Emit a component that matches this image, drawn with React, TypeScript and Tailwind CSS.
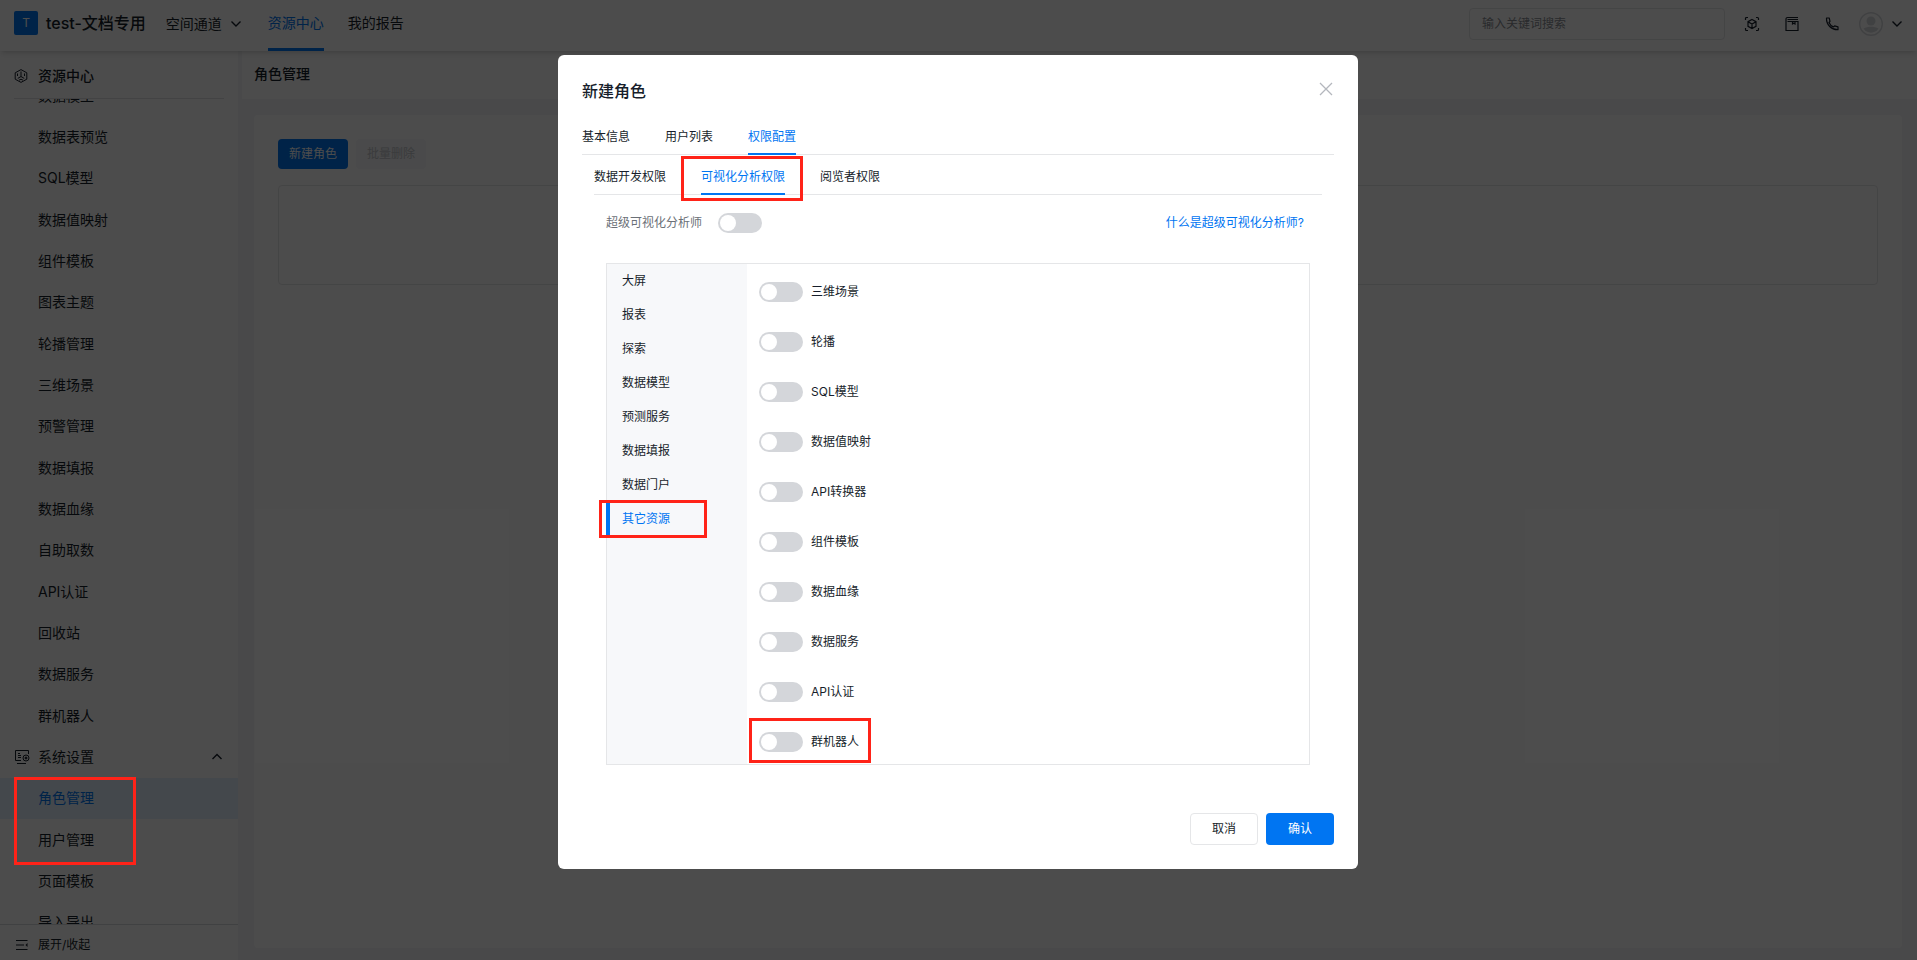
import React, { useState } from 'react';

const sideItems = [
  '数据表预览', 'SQL模型', '数据值映射', '组件模板', '图表主题', '轮播管理', '三维场景', '预警管理',
  '数据填报', '数据血缘', '自助取数', 'API认证', '回收站', '数据服务', '群机器人',
];

const resourceTypes = ['大屏', '报表', '探索', '数据模型', '预测服务', '数据填报', '数据门户', '其它资源'];

const permissions = [
  '三维场景', '轮播', 'SQL模型', '数据值映射', 'API转换器', '组件模板', '数据血缘', '数据服务', 'API认证', '群机器人',
];

const Chevron: React.FC<{ up?: boolean }> = ({ up = false }) => (
  <svg className="w-3 h-3" viewBox="0 0 12 12" fill="none" stroke="currentColor" strokeWidth="1.4">
    <path d={up ? 'M1.5 8 6 3.5 10.5 8' : 'M1.5 3.5 6 8l4.5-4.5'} />
  </svg>
);

const CubeIcon = () => (
  <svg className="w-3.5 h-3.5" viewBox="0 0 14 14" fill="none" stroke="currentColor">
    <path d="M7 .6 12.8 3.8v6.4L7 13.4 1.2 10.2V3.8z" />
    <path d="M7 2.5v5M7 7.5 3.8 9.4M7 7.5l3.200 1.900M3.500 4.500v2.500M10.500 4.500v2.500M5 11.200l2-1 2 1" />
  </svg>
);

const SettingsIcon = () => (
  <svg className="w-4 h-4" viewBox="0 0 16 16" fill="none" stroke="currentColor">
    <path d="M14.5 5V1.5h-13v10H7M3 14.5h9M4 4.5h2M4 6.5h3M4 8.5h3" />
    <circle cx="12" cy="9" r="3" />
    <circle cx="12" cy="9" r="1" fill="currentColor" />
  </svg>
);

const CollapseIcon = () => (
  <svg className="w-3 h-3" viewBox="0 0 12 12" fill="none" stroke="currentColor" strokeWidth="1.2">
    <path d="M0 1.5h11.5M0 6h8M0 10.5h11.5" />
    <path d="M11.5 4l-2 2 2 2z" fill="currentColor" stroke="none" />
  </svg>
);

const ScanIcon = () => (
  <svg className="w-4 h-4" viewBox="0 0 16 16" fill="none" stroke="currentColor" strokeWidth="1.2">
    <path d="M1.5 4V2.5a1 1 0 0 1 1-1H4M12 1.5h1.5a1 1 0 0 1 1 1V4M14.5 12v1.500a1 1 0 0 1-1 1H12M4 14.500H2.500a1 1 0 0 1-1-1V12" />
    <path d="M8 3.5l4 2.200v4.600l-4 2.200-4-2.200V5.700zM4 5.700 8 8l4-2.300M8 8v4.500" />
  </svg>
);

const BookIcon = () => (
  <svg className="w-4 h-4" viewBox="0 0 16 16" fill="none" stroke="currentColor" strokeWidth="1.2">
    <path d="M14 1.500H3.500A1.500 1.500 0 0 0 2 3v11.500h12v-9H3.500M3.500 3.500H14M8.500 5.500V8l1.200-.8L11 8V5.500" />
  </svg>
);

const PhoneIcon = () => (
  <svg className="w-4 h-4" viewBox="0 0 16 16" fill="none" stroke="currentColor" strokeWidth="1.2" strokeLinejoin="round">
    <path d="M2.500 2h2.700l.8 3.300-1 1.200c.8 2 2.300 3.500 4.300 4.400l1.300-1 3.400 1v2.800C7.500 14 2.200 8.800 2.500 2z" />
  </svg>
);

const Avatar = () => (
  <svg className="w-6 h-6" viewBox="0 0 24 24">
    <circle cx="12" cy="12" r="11.3" fill="none" stroke="#d8dade" strokeWidth="1.4" />
    <circle cx="12" cy="9" r="4.5" fill="#d8dade" />
    <path d="M4.500 16.500c4-2.500 11-2.500 15 0a8.800 8.800 0 0 1-15 0z" fill="#d8dade" />
  </svg>
);

const Switch: React.FC<{ label: string; muted?: boolean }> = ({ label, muted = false }) => (
  <label className={`flex w-fit items-center ${muted ? 'flex-row-reverse gap-4 text-[#6b7077]' : 'gap-2'}`}>
    <input
      type="checkbox"
      role="switch"
      className="appearance-none w-11 h-5 rounded-full bg-[#d4d6da] checked:bg-[#0075f2] p-0.5 before:block before:w-4 before:h-4 before:rounded-full before:bg-white checked:before:translate-x-6"
    />
    <span>{label}</span>
  </label>
);

const SideLink: React.FC<{ name: string; active?: boolean }> = ({ name, active = false }) => (
  <a href="#" className={`flex-1 flex items-center pl-[38px] ${active ? 'bg-[#e3f1ff] text-[#0075f2]' : ''}`}>
    {name}
  </a>
);

// Marks the spots the reader has to look at
const Highlight: React.FC<{ className: string }> = ({ className }) => (
  <span className={`absolute border-3 border-[#ff2318] pointer-events-none ${className}`} />
);

const Header = () => (
  <header className="relative z-10 h-[51px] shrink-0 bg-white shadow-md flex items-center px-3.5">
    <div className="w-6 h-6 mb-1.5 rounded-xs bg-[#0075f2] text-white text-xs flex items-center justify-center">T</div>
    <span className="ml-2 mb-1.5 text-base font-medium">test-文档专用</span>
    <button className="ml-5 mb-1 flex items-center gap-2">
      空间通道 <Chevron />
    </button>
    <nav className="ml-[26px] self-stretch flex gap-6">
      <a href="#" className="flex items-center pb-0.5 border-b-3 border-[#0075f2] text-[#0075f2]">资源中心</a>
      <a href="#" className="flex items-center pb-0.5 border-b-3 border-transparent">我的报告</a>
    </nav>
    <input
      aria-label="搜索"
      placeholder="输入关键词搜索"
      className="ml-auto mb-1 w-64 h-8 px-3 text-xs rounded-sm border border-[#e5e6e8] placeholder:text-[#8a8e95]"
    />
    <div className="ml-[19px] mb-1 flex items-center gap-6">
      <button aria-label="扫描"><ScanIcon /></button>
      <button aria-label="文档"><BookIcon /></button>
      <button aria-label="电话"><PhoneIcon /></button>
    </div>
    <button aria-label="账户" className="ml-[19px] mb-1 flex items-center gap-2">
      <Avatar />
      <Chevron />
    </button>
  </header>
);

const Sidebar = () => (
  <aside className="w-[238px] shrink-0 bg-white flex flex-col">
    <div className="mx-3.5 h-12 shrink-0 flex items-center gap-2.5 border-b border-[#e0e1e3] pt-0.5 font-medium">
      <CubeIcon /> 资源中心
    </div>
    <div className="flex-1 min-h-0 overflow-hidden flex flex-col">
      <nav className="flex-1 flex flex-col -mt-6 -mb-[19px]">
        <SideLink name="数据模型" />
        {sideItems.map((name) => (
          <SideLink key={name} name={name} />
        ))}
        <button className="flex-1 flex items-center pl-3.5 pr-[15px] gap-2">
          <SettingsIcon /> 系统设置
          <span className="ml-auto"><Chevron up /></span>
        </button>
        <SideLink name="角色管理" active />
        <SideLink name="用户管理" />
        <SideLink name="页面模板" />
        <SideLink name="导入导出" />
      </nav>
    </div>
    <button className="h-9 shrink-0 border-t border-[#d8dade] flex items-center gap-2.5 pl-4 pb-1 pt-2 text-xs">
      <CollapseIcon /> 展开/收起
    </button>
  </aside>
);

const RolePage = () => (
  <main className="flex-1 flex flex-col bg-[#f5f6f8]">
    <h1 className="ml-1 pl-3 pb-0.5 h-12 shrink-0 flex items-center bg-white font-medium">角色管理</h1>
    <section className="flex-1 ml-4 mr-[15px] mt-4 mb-3 p-6 rounded-sm bg-white text-xs">
      <div className="flex gap-2">
        <button className="h-[30px] w-[70px] rounded-sm bg-[#0075f2] text-white">新建角色</button>
        <button disabled className="h-[30px] w-[70px] rounded-sm bg-[#f7f8fa] text-[#c4c7cc]">批量删除</button>
      </div>
      <div className="mt-4 h-[100px] rounded-sm border border-[#e5e6e8]" />
    </section>
  </main>
);

const RoleDialog = () => {
  const [type, setType] = useState('其它资源');
  return (
    <div role="dialog" aria-label="新建角色" className="w-[800px] rounded-md bg-white p-6 text-xs">
      <div className="flex items-start justify-between">
        <h2 className="text-base font-medium">新建角色</h2>
        <button aria-label="关闭" className="mt-[3px] mr-px text-[#b4b7bd]">
          <svg className="w-3.5 h-3.5" viewBox="0 0 14 14" stroke="currentColor" strokeWidth="1.3">
            <path d="M1 1l12 12M13 1 1 13" />
          </svg>
        </button>
      </div>

      <div className="mt-4 h-9 flex gap-[35px] border-b border-[#e5e6e8]">
        <button>基本信息</button>
        <button>用户列表</button>
        <button className="-mb-px border-b-2 border-[#0075f2] pt-px text-[#0075f2]">权限配置</button>
      </div>

      <div className="mx-3 h-10 pt-1 flex gap-[35px] border-b border-[#e5e6e8]">
        <button>数据开发权限</button>
        <button className="relative -mb-px border-b-2 border-[#0075f2] pt-px text-[#0075f2]">
          可视化分析权限
          <Highlight className="-left-5 -right-[18px] -top-[3px] -bottom-2" />
        </button>
        <button>阅览者权限</button>
      </div>

      <div className="mx-6 mt-[18px] flex items-center justify-between">
        <Switch label="超级可视化分析师" muted />
        <a href="#" className="mr-1.5 text-[#0075f2]">什么是超级可视化分析师?</a>
      </div>

      <div className="mx-6 mt-[30px] flex border border-[#e5e6e8]">
        <div className="w-[140px] bg-[#f7f8fa]">
          {resourceTypes.map((name) => (
            <button
              key={name}
              onClick={() => setType(name)}
              className={`relative block w-full h-[34px] pl-[15px] text-left ${type === name ? 'text-[#0075f2]' : ''}`}
            >
              {type === name && <span className="absolute -left-px inset-y-0 w-1 bg-[#0075f2]" />}
              {name}
              {name === '其它资源' && <Highlight className="-left-2 right-10 -inset-y-0.5" />}
            </button>
          ))}
        </div>
        <div className="flex-1 flex flex-col gap-[30px] pt-[18px] pb-3 pl-3">
          {permissions.map((name) => (
            <div key={name} className="relative h-5 w-fit">
              <Switch label={name} />
              {name === '群机器人' && <Highlight className="-left-2.5 -right-3 -top-3.5 -bottom-[11px]" />}
            </div>
          ))}
        </div>
      </div>

      <div className="mt-12 flex justify-end gap-2">
        <button className="w-[68px] h-8 rounded-sm border border-[#e5e6e8]">取消</button>
        <button className="w-[68px] h-8 rounded-sm bg-[#0075f2] text-white">确认</button>
      </div>
    </div>
  );
};

const App = () => (
  <div className="relative h-screen flex flex-col overflow-hidden text-sm text-[#171e2b] font-[Inter,'Noto_Sans_CJK_SC',sans-serif]">
    <Header />
    <div className="flex-1 min-h-0 flex">
      <Sidebar />
      <RolePage />
    </div>
    <div className="absolute inset-0 z-20 bg-black/70 flex justify-center items-start pt-[55px] pr-px">
      <RoleDialog />
    </div>
    <Highlight className="z-30 left-3.5 bottom-[95px] w-[122px] h-[88px]" />
  </div>
);

export default App;
